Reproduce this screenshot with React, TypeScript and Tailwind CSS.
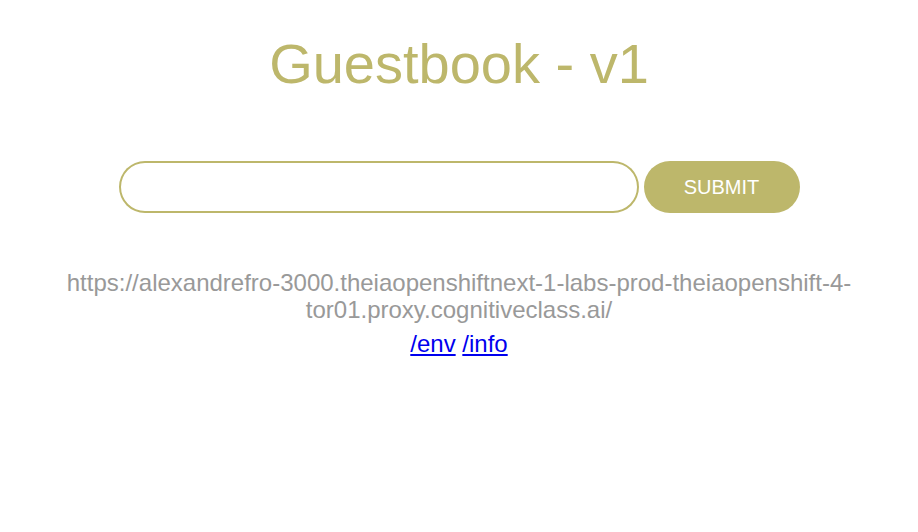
export default function App() {
  return (
    <div className="min-h-[532px] bg-white font-['Liberation_Sans',Arial,sans-serif] text-center">
      <h1 className="pt-[32px] text-[56px] font-light leading-[64px] text-[#bdb76b]">
        Guestbook - v1
      </h1>

      <form
        className="mt-[65px] flex items-center justify-center gap-[5px]"
        onSubmit={(e) => e.preventDefault()}
      >
        <input
          type="text"
          className="h-[52px] w-[520px] rounded-full px-6 text-2xl shadow-[inset_0_0_0_2px_#bdb76b] outline-none"
        />
        <button
          type="submit"
          className="h-[52px] w-[156px] rounded-full bg-[#bdb76b] text-xl text-white uppercase"
        >
          Submit
        </button>
      </form>

      <div className="mx-auto mt-[56px] max-w-[860px] text-2xl leading-[27px] text-[#999]">
        https://alexandrefro-3000.theiaopenshiftnext-1-labs-prod-theiaopenshift-4-tor01.proxy.cognitiveclass.ai/
      </div>
      <div className="mt-[7px] text-2xl leading-[27px]">
        <a href="/env" className="text-[#0000ee] underline">
          /env
        </a>{" "}
        <a href="/info" className="text-[#0000ee] underline">
          /info
        </a>
      </div>
    </div>
  );
}
